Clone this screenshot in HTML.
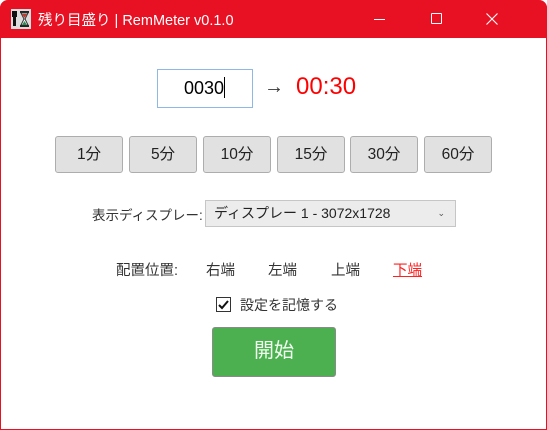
<!DOCTYPE html>
<html><head><meta charset="utf-8"><style>
*{margin:0;padding:0;box-sizing:border-box}
body{width:547px;height:430px;overflow:hidden;background:#fff;font-family:"Liberation Sans","Noto Sans CJK JP",sans-serif;position:relative;color:#222}
.win{position:absolute;left:0;top:0;width:547px;height:430px;border:1px solid #e81123;border-top:none;border-radius:8px 8px 0 0}
.tb{position:absolute;left:0;top:0;width:547px;height:38px;background:#e81123;border-radius:8px 8px 0 0}
.ab{position:absolute}
.btn{position:absolute;top:136px;width:68px;height:37px;background:#e1e1e1;border:1px solid #adadad;border-radius:3px;font-size:15.5px;text-align:center;line-height:35px;color:#222}
.pos{position:absolute;top:259px;font-size:14.5px;color:#333}
</style></head><body>
<div class="win"></div>
<div class="tb">
<svg class="ab" style="left:11px;top:9px" width="20" height="20" viewBox="0 0 20 20"><rect width="20" height="20" fill="#ddd"/><rect x="1" y="2" width="5" height="6" fill="#111"/><rect x="2" y="8" width="3" height="9" fill="#111"/><rect x="9" y="2" width="9" height="2" fill="#222"/><rect x="9" y="16" width="9" height="2" fill="#222"/><path d="M10 4 L17 4 L14 10 L17 16 L10 16 L13 10Z" fill="#fff" stroke="#333"/><path d="M11 5 L16 5 L13.5 9Z" fill="#c0392b"/><path d="M11 16 L16 16 L13.5 12Z" fill="#2e8b57"/></svg>
<div class="ab" style="left:38px;top:9px;color:#fff;font-size:14.5px;white-space:nowrap">残り目盛り | RemMeter v0.1.0</div>
<div class="ab" style="left:374px;top:19px;width:11px;height:1px;background:#fff"></div>
<div class="ab" style="left:431px;top:13px;width:11px;height:11px;border:1px solid #fff;border-radius:1px"></div>
<svg class="ab" style="left:486px;top:13px" width="12" height="12"><path d="M0.5 0.5L11.5 11.5M11.5 0.5L0.5 11.5" stroke="#fff" stroke-width="1.1"/></svg>
</div>
<div class="ab" style="left:157px;top:69px;width:96px;height:39px;border:1px solid #8fb8e8;font-size:18px;line-height:37px;padding-left:26px;color:#000">0030<span style="display:inline-block;width:1px;height:21px;background:#000;vertical-align:-4px"></span></div>
<div class="ab" style="left:264px;top:76px;font-size:20px;color:#333">→</div>
<div class="ab" style="left:296px;top:73px;font-size:24px;color:#ff0000">00:30</div>
<div class="btn" style="left:55px">1分</div>
<div class="btn" style="left:129px">5分</div>
<div class="btn" style="left:203px">10分</div>
<div class="btn" style="left:277px">15分</div>
<div class="btn" style="left:350px">30分</div>
<div class="btn" style="left:424px">60分</div>
<div class="ab" style="left:92px;top:204px;font-size:13.5px;color:#333">表示ディスプレー:</div>
<div class="ab" style="left:205px;top:200px;width:251px;height:27px;background:#ececec;border:1px solid #c6c6c6;font-size:14px;line-height:25px;padding-left:8px;color:#222">ディスプレー 1 - 3072x1728<span style="position:absolute;right:10px;top:0;font-size:9px;color:#555">&#8964;</span></div>
<div class="pos" style="left:116px">配置位置:</div>
<div class="pos" style="left:206px">右端</div>
<div class="pos" style="left:268px">左端</div>
<div class="pos" style="left:331px">上端</div>
<div class="pos" style="left:393px;color:#ff2020;text-decoration:underline">下端</div>
<div class="ab" style="left:216px;top:297px;width:15px;height:15px;border:1px solid #333;background:#fff"><svg width="13" height="13" style="position:absolute;left:0;top:0"><path d="M2 7L5 10L11 3" stroke="#111" stroke-width="2" fill="none"/></svg></div>
<div class="ab" style="left:240px;top:295px;font-size:14px;color:#333">設定を記憶する</div>
<div class="ab" style="left:212px;top:327px;width:124px;height:50px;background:#4caf50;border:1px solid #8a8a8a;border-radius:3px;color:#f0fff0;font-size:20px;text-align:center;line-height:47px">開始</div>
</body></html>
